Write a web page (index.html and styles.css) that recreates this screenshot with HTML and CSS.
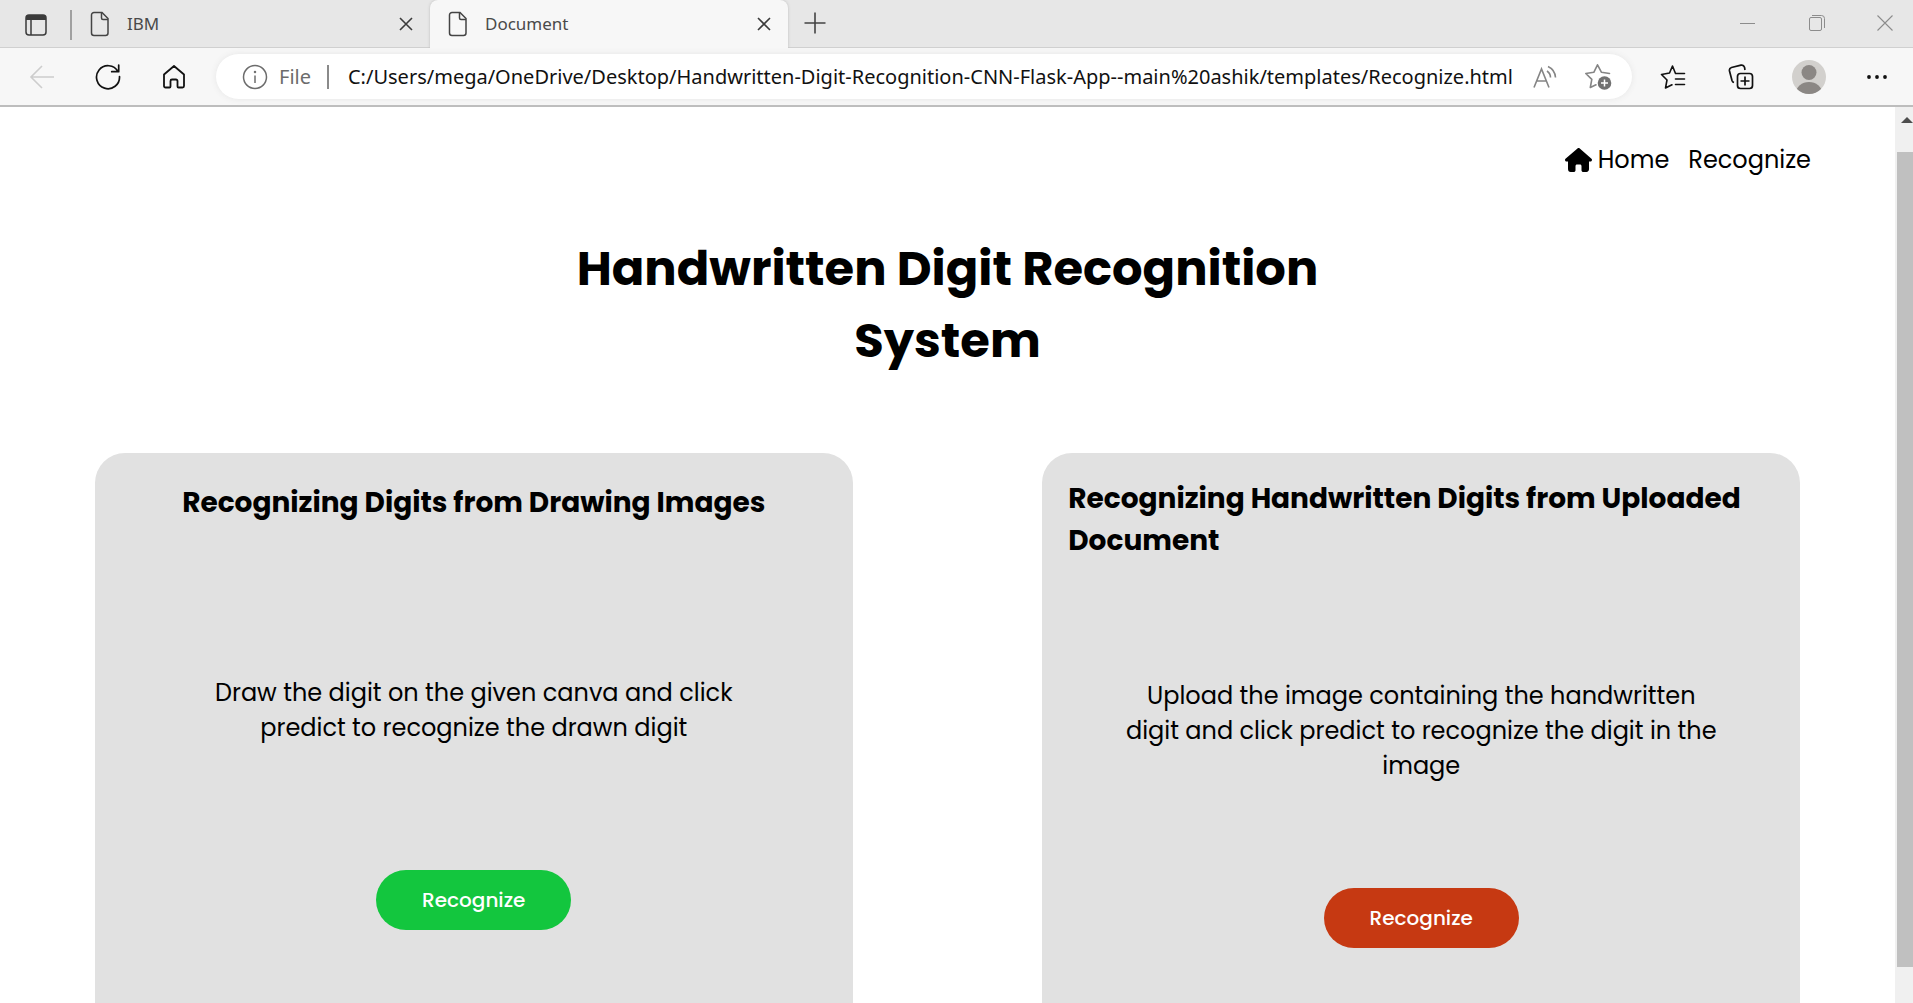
FILE: index.html
```
<!DOCTYPE html>
<html lang="en">
<head>
<meta charset="utf-8">
<meta name="viewport" content="width=device-width, initial-scale=1">
<title>Document</title>
<link rel="stylesheet" href="styles.css">
</head>
<body>
<div class="browser">
  <div class="tabstrip">
    <button class="tab-actions" aria-label="Tab actions">
      <svg width="22" height="22" viewBox="0 0 22 22"><rect x="1" y="1" width="20" height="20" rx="3" fill="none" stroke="#3b3b3b" stroke-width="1.5"/><path d="M1 6V4a3 3 0 0 1 3-3h14a3 3 0 0 1 3 3v2z" fill="#3b3b3b"/><path d="M6 6v15" stroke="#3b3b3b" stroke-width="1.5"/></svg>
    </button>
    <div class="tab">
      <svg width="20" height="26" viewBox="0 0 20 26" fill="none" stroke="#444" stroke-width="1.5"><path d="M4 1.500h8l6 6V22a2.500 2.500 0 0 1-2.500 2.500h-11.500A2.500 2.500 0 0 1 1.500 22V4A2.500 2.500 0 0 1 4 1.500z"/><path d="M11.500 1.500v5.500a1.500 1.500 0 0 0 1.500 1.500h5"/></svg>
      <span class="tab-title">IBM</span>
      <button class="close" aria-label="Close tab"><svg width="14" height="14" viewBox="0 0 14 14"><path d="M1 1l12 12M13 1L1 13" stroke="#3b3b3b" stroke-width="1.6"/></svg></button>
    </div>
    <div class="tab tab-active">
      <svg width="20" height="26" viewBox="0 0 20 26" fill="none" stroke="#444" stroke-width="1.5"><path d="M4 1.500h8l6 6V22a2.500 2.500 0 0 1-2.500 2.500h-11.500A2.500 2.500 0 0 1 1.500 22V4A2.500 2.500 0 0 1 4 1.500z"/><path d="M11.500 1.500v5.500a1.500 1.500 0 0 0 1.500 1.500h5"/></svg>
      <span class="tab-title">Document</span>
      <button class="close" aria-label="Close tab"><svg width="14" height="14" viewBox="0 0 14 14"><path d="M1 1l12 12M13 1L1 13" stroke="#3b3b3b" stroke-width="1.6"/></svg></button>
    </div>
    <button class="new-tab" aria-label="New tab"><svg width="22" height="22" viewBox="0 0 22 22"><path d="M11 0.500v21M0.500 11h21" stroke="#444" stroke-width="1.6"/></svg></button>
    <div class="window-controls">
      <button aria-label="Minimize"><svg width="16" height="16" viewBox="0 0 16 16"><path d="M0 8.500h15" stroke="#8c8c8c"/></svg></button>
      <button aria-label="Restore"><svg width="16" height="16" viewBox="0 0 16 16" fill="none" stroke="#8c8c8c"><rect x="0.500" y="2.500" width="12" height="13" rx="1.500"/><path d="M3 0.500h9.500a3 3 0 0 1 3 3V13"/></svg></button>
      <button aria-label="Close window"><svg width="16" height="16" viewBox="0 0 16 16"><path d="M0.500 0.500l15 15M15.500 0.500l-15 15" stroke="#8c8c8c" stroke-width="1.1"/></svg></button>
    </div>
  </div>
  <div class="toolbar">
    <button class="tool" aria-label="Back"><svg width="26" height="26" viewBox="0 0 26 26" fill="none" stroke="#cdcdcd" stroke-width="1.6"><path d="M25 13H2M13 2L2 13l11 11"/></svg></button>
    <button class="tool" aria-label="Refresh"><svg width="26" height="26" viewBox="0 0 26 26" fill="none" stroke="#111" stroke-width="1.7"><path d="M24.500 12.500A11.500 11.500 0 1 1 23 7.500M23.700 1v6.700h-7" stroke-linecap="round" stroke-linejoin="round"/></svg></button>
    <button class="tool" aria-label="Home"><svg width="24" height="26" viewBox="0 0 24 26" fill="none" stroke="#111" stroke-width="1.8" stroke-linejoin="round"><path d="M2 10.500L12 2l10 8.500V22a1.500 1.500 0 0 1-1.500 1.500H16.500a1 1 0 0 1-1-1V17a1.500 1.500 0 0 0-1.500-1.500h-4A1.500 1.500 0 0 0 8.500 17v5.500a1 1 0 0 1-1 1H3.500A1.500 1.500 0 0 1 2 22z"/></svg></button>
    <div class="address">
      <svg width="26" height="26" viewBox="0 0 26 26" fill="none" stroke="#6c6c6c" stroke-width="1.5"><circle cx="13" cy="13" r="11.500"/><path d="M13 11.500v7.500"/><circle cx="13" cy="8" r="0.500"/></svg>
      <label class="scheme" for="url">File</label>
      <input class="url" id="url" type="text" value="C:/Users/mega/OneDrive/Desktop/Handwritten-Digit-Recognition-CNN-Flask-App--main%20ashik/templates/Recognize.html">
      <button class="address-tool" aria-label="Read aloud"><svg width="24" height="24" viewBox="0 0 24 24" fill="none" stroke="#858585" stroke-width="1.600"><path d="M1 22.500L8.500 4 16 22.500M3.500 16h10M14 6a8 8 0 0 1 3.500 6.500M15 1.500a13 13 0 0 1 7.500 11"/></svg></button>
      <button class="address-tool" aria-label="Add to favorites"><svg width="28" height="28" viewBox="0 0 28 28"><path d="M25.500 10.500L17.500 9.300 13.500 1.800 9.800 9.300 1.800 10.500l6 5.800L6.300 24.500 12 21.800" fill="none" stroke="#858585" stroke-width="1.6" stroke-linejoin="round" stroke-linecap="round"/><circle cx="20.500" cy="20" r="6.800" fill="#717171"/><path d="M20.500 16.500v7M17 20h7" stroke="#fff" stroke-width="1.5"/></svg></button>
    </div>
    <button class="tool tool-wide" aria-label="Favorites"><svg width="26" height="26" viewBox="0 0 26 26" fill="none" stroke="#111" stroke-width="1.6" stroke-linejoin="round" stroke-linecap="round"><path d="M24.500 9.500h-9L12.500 2 9.500 9l-8 1.500L7 16 5.500 24 12 20.800M15.500 15h9M15.500 20.500h9"/></svg></button>
    <button class="tool tool-wide" aria-label="Collections"><svg width="26" height="26" viewBox="0 0 26 26" fill="none" stroke="#111" stroke-width="1.7"><rect x="9.500" y="9.500" width="15" height="15" rx="3"/><path d="M17 12.500v9M12.500 17h9M6 18.500a3 3 0 0 1-2-2L1.500 7A3 3 0 0 1 3.500 3.500L13 1.200a3 3 0 0 1 3.500 2L17 6"/></svg></button>
    <button class="tool tool-wide" aria-label="Profile"><svg width="34" height="34" viewBox="0 0 34 34"><defs><clipPath id="avatar"><circle cx="17" cy="17" r="17"/></clipPath></defs><g clip-path="url(#avatar)"><path d="M0 0h34v34H0z" fill="#d2d0cd"/><circle cx="17" cy="12.500" r="7.500" fill="#8b8784"/><ellipse cx="17" cy="33" rx="13" ry="11" fill="#8b8784"/></g></svg></button>
    <button class="tool tool-wide" aria-label="Settings and more"><svg width="22" height="6" viewBox="0 0 22 6" fill="#111"><circle cx="3" cy="3" r="1.900"/><circle cx="11" cy="3" r="1.900"/><circle cx="19" cy="3" r="1.900"/></svg></button>
  </div>
  <div class="viewport">
    <div class="page">
      <nav class="nav">
        <a href="#home"><svg width="27" height="24" viewBox="0 0 576 512"><path d="M575.800 255.500c0 18-15 32.100-32 32.100h-32l.7 160.200c0 35-22 64.200-56 64.200H392c-22 0-40-18-40-40v-88c0-18-14-32-32-32h-64c-18 0-32 14-32 32v88c0 22-18 40-40 40h-64c-34 0-56-28-56-64V287.600H32c-18 0-32-14-32-32.100 0-9 3-17 10-24L266.400 8c7-7 15-8 22-8s15 2 21 7l255.400 224.500c8 7 12 15 11 24z"/></svg>Home</a>
        <a href="#recognize">Recognize</a>
      </nav>
      <h1 class="title">Handwritten Digit Recognition System</h1>
      <main class="cards">
        <section class="card">
          <h2>Recognizing Digits from Drawing Images</h2>
          <p>Draw the digit on the given canva and click predict to recognize the drawn digit</p>
          <button class="recognize recognize-green">Recognize</button>
        </section>
        <section class="card card-upload">
          <h2>Recognizing Handwritten Digits from Uploaded Document</h2>
          <p>Upload the image containing the handwritten digit and click predict to recognize the digit in the image</p>
          <button class="recognize recognize-red">Recognize</button>
        </section>
      </main>
    </div>
    <div class="scrollbar">
      <svg width="12" height="6" viewBox="0 0 12 6"><path d="M0 6L6 0l6 6z" fill="#4d4d4d"/></svg>
      <div class="thumb"></div>
    </div>
  </div>
</div>
</body>
</html>
```
FILE: styles.css
```
* { box-sizing: border-box; }

body {
  margin: 0;
  color: #000;
  font-family: Poppins, Inter, sans-serif;
}

button {
  display: flex;
  align-items: center;
  justify-content: center;
  flex: none;
  margin: 0;
  padding: 0;
  border: 0;
  background: none;
  font-family: inherit;
}

svg { flex: none; }

.browser {
  display: flex;
  flex-direction: column;
  height: 100vh;
  overflow: hidden;
}

/* Tab strip */
.tabstrip {
  display: flex;
  height: 48px;
  flex: none;
  background: #e7e7e7;
  box-shadow: inset 0 -1px #d0d0d0;
  font-family: "Segoe UI", "Noto Sans", sans-serif;
}

.tab-actions {
  width: 72px;
  height: 30px;
  margin-top: 10px;
  padding-left: 2px;
  border-right: 2px solid #a0a0a0;
}

.tab {
  display: flex;
  align-items: center;
  width: 358px;
  padding: 0 15px 0 18px;
}

.tab-active {
  background: #f7f7f7;
  border-radius: 8px 8px 0 0;
  box-shadow: 0 0 3px #bbb;
  clip-path: inset(0 -4px 0 -4px);
}

.tab-title {
  flex: 1;
  padding: 0 0 2px 17px;
  color: #4a4a4a;
  font-size: 17px;
}

.close { width: 18px; height: 24px; }

.new-tab { width: 54px; height: 46px; }

.window-controls {
  display: flex;
  height: 46px;
  margin-left: auto;
}

.window-controls button { width: 69px; }

.window-controls button:last-child {
  justify-content: flex-start;
  width: 62px;
  padding-left: 26px;
}

/* Toolbar */
.toolbar {
  display: flex;
  align-items: center;
  height: 59px;
  flex: none;
  padding: 0 2px 0 9px;
  background: #f7f7f7;
  border-bottom: 2px solid #bdbdbd;
}

.tool { width: 66px; height: 45px; }

.tool-wide { width: 68px; }

.address {
  display: flex;
  flex: 1;
  align-items: center;
  min-width: 0;
  height: 45px;
  margin: 0 7px 0 9px;
  padding: 0 20px 0 26px;
  background: #fff;
  border-radius: 23px;
  box-shadow: 0 0 6px #e6e6e6;
  font-family: "Segoe UI", "Noto Sans", sans-serif;
}

.scheme {
  margin: 0 19px 0 11px;
  padding-right: 16px;
  border-right: 2px solid #8a8a8a;
  color: #6c6c6c;
  font-size: 20px;
  line-height: 24px;
}

.url {
  flex: 1;
  min-width: 0;
  padding: 0;
  border: 0;
  background: none;
  color: #111;
  font: 20px "Segoe UI", "Noto Sans", sans-serif;
}

.address-tool { width: 54px; }

.address-tool:last-child { width: 28px; margin-left: 12px; }

/* Web page */
.viewport {
  display: flex;
  flex: 1;
  min-height: 0;
  background: #fff;
}

.page {
  flex: 1;
  overflow: hidden;
}

.nav {
  display: flex;
  justify-content: flex-end;
  gap: 19px;
  padding: 34px 84px 0 0;
}

.nav a {
  display: flex;
  align-items: center;
  gap: 6px;
  color: #000;
  font-size: 24px;
  line-height: 38px;
  text-decoration: none;
}

.title {
  max-width: 800px;
  margin: 54px auto 76px;
  font-size: 48px;
  font-weight: 700;
  line-height: 72px;
  text-align: center;
}

.cards {
  display: flex;
  justify-content: space-around;
}

.card {
  display: flex;
  flex-direction: column;
  align-items: center;
  width: 40%;
  min-height: 608px;
  padding: 29px 26px;
  background: #e1e1e1;
  border-radius: 30px;
}

.card-upload { padding-top: 25px; }

.card h2 {
  margin: 0 0 151px;
  font-size: 28px;
  font-weight: 700;
  line-height: 42px;
}

.card-upload h2 { margin-bottom: 116px; }

.card p {
  max-width: 606px;
  margin: 0 0 125px;
  font-size: 24px;
  line-height: 35px;
  text-align: center;
}

.card-upload p { margin-bottom: 105px; }

.recognize {
  width: 195px;
  height: 60px;
  border-radius: 30px;
  color: #fff;
  font-size: 20px;
  font-weight: 500;
}

.recognize-green { background: #13c63e; }

.recognize-red { background: #c63912; }

/* Scrollbar */
.scrollbar {
  display: flex;
  flex: none;
  flex-direction: column;
  align-items: flex-end;
  width: 18px;
  padding: 10px 0 36px 2px;
  background: #f0f0f0;
}

.thumb {
  flex: 1;
  width: 100%;
  margin-top: 29px;
  background: #c0c0c0;
}
```
